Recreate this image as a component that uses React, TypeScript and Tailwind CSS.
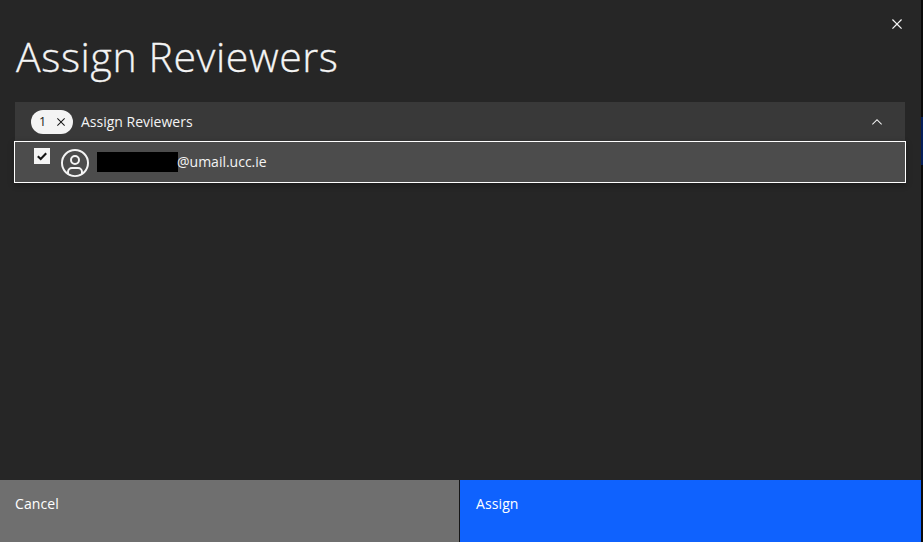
function CloseIcon({ className }: { className: string }) {
  return (
    <svg viewBox="0 0 32 32" fill="currentColor" className={className} aria-hidden="true">
      <path d="M24 9.4L22.6 8 16 14.6 9.4 8 8 9.4 14.6 16 8 22.6 9.4 24 16 17.4 22.6 24 24 22.6 17.4 16 24 9.4z" />
    </svg>
  );
}

function ChevronUp() {
  return (
    <svg viewBox="0 0 16 16" fill="currentColor" className="mr-5 size-4" aria-hidden="true">
      <path d="M8 5L13 10 12.3 10.7 8 6.4 3.7 10.7 3 10z" />
    </svg>
  );
}

function UserAvatar() {
  return (
    <svg viewBox="0 0 32 32" fill="currentColor" className="mt-[5px] ml-[9px] size-8 shrink-0" aria-hidden="true">
      <path d="M16 8a5 5 0 1 0 5 5 5 5 0 0 0-5-5zm0 8a3 3 0 1 1 3-3 3 3 0 0 1-3 3z" />
      <path d="M16 2A14 14 0 1 0 30 16 14 14 0 0 0 16 2Zm-6 24.3765V25a3 3 0 0 1 3-3h6a3 3 0 0 1 3 3v1.3765a11.9 11.9 0 0 1-12 0Zm13.9925-1.4507A5 5 0 0 0 19 20H13a5 5 0 0 0-4.9925 4.9258 12 12 0 1 1 15.985 0Z" />
    </svg>
  );
}

function ReviewerSelect() {
  return (
    <div className="mr-[15px] ml-[14px]">
      <div className="mx-px flex h-[39px] items-center bg-[#393939] pl-4 pb-px pt-0.5">
        <span className="flex h-6 w-[42px] items-center justify-between rounded-full bg-[#f4f4f4] pl-2 pr-1 text-[#161616]">
          <span className="text-[12.5px] leading-4">1</span>
          <CloseIcon className="size-4" />
        </span>
        <span className="ml-2 flex-1 text-[14px] leading-[18px]">Assign Reviewers</span>
        <ChevronUp />
      </div>
      <div className="flex h-[42px] items-start border border-white bg-[#4c4c4c] pl-[19px] shadow-[0_2px_6px_rgba(0,0,0,0.3)]">
        <span className="mt-[6px] flex size-4 shrink-0 items-center justify-center bg-[#f4f4f4]">
          <svg viewBox="0 0 16 16" className="size-4" fill="none" stroke="#161616" strokeWidth="2.1">
            <path d="M3.8 8.2L6.7 11 12.2 5.2" />
          </svg>
        </span>
        <UserAvatar />
        <span className="mt-[10px] ml-[6px] h-5 w-[81px] bg-black" />
        <span className="-ml-px mt-[11px] text-[14px] leading-[18px]">@umail.ucc.ie</span>
      </div>
    </div>
  );
}

export default function App() {
  return (
    <div className="flex h-[542px] w-[923px] overflow-hidden bg-[#0b0b0b] font-['Open_Sans',sans-serif] text-[#f4f4f4]">
      <main className="flex w-[921px] flex-col bg-[#262626]">
        <header className="flex h-[102px] items-start justify-between">
          <h1 className="mt-[31px] ml-4 text-[41px] leading-[50px] font-light tracking-[0.6px] whitespace-nowrap [-webkit-text-stroke:0.3px_currentColor]">
            Assign Reviewers
          </h1>
          <button aria-label="Close" className="mt-[14px] mr-[14px]">
            <CloseIcon className="size-5" />
          </button>
        </header>
        <ReviewerSelect />
        <footer className="mt-auto flex h-[62px] bg-[#161616] text-[14px] leading-[18px] tracking-[0.1px] text-white">
          <button className="mr-px flex w-[459px] items-start bg-[#6f6f6f] pt-[15px] pl-[15px]">Cancel</button>
          <button className="flex flex-1 items-start bg-[#0f62fe] pt-[15px] pl-4">Assign</button>
        </footer>
      </main>
      <aside className="w-0.5 pt-[117px]">
        <div className="h-12 bg-[#061f5c]" />
      </aside>
    </div>
  );
}
